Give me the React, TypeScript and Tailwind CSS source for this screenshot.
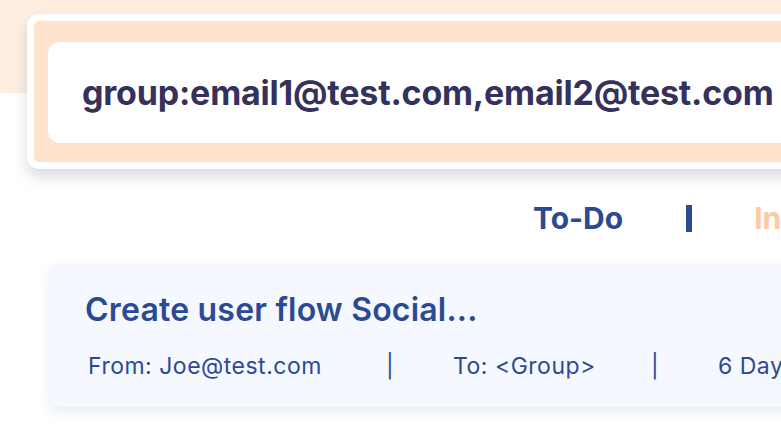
import React from "react";

export default function App() {
  const font = { fontFamily: "Inter, 'Noto Sans', sans-serif" };
  return (
    <div
      className="w-[781px] h-[428px] overflow-hidden bg-[linear-gradient(#fdeee0_0,#fdeee0_93px,#ffffff_93px)]"
      style={font}
    >
      <div className="pl-[27px] pt-[14px]">
        <div className="w-[900px] rounded-[12px] border-[7px] border-white bg-[#fde3cb] pl-[14px] pt-[21px] pb-[19px] shadow-[0_8px_14px_rgba(120,130,150,0.28)]">
          <div className="h-[101px] rounded-[12px] bg-white pl-[34px] flex items-center">
            <span className="text-[34px] font-bold tracking-[-0.2px] text-[#34315b] whitespace-nowrap">
              group:email1@test.com,email2@test.com
            </span>
          </div>
        </div>
      </div>
      <div className="flex items-center h-[50px] mt-[24px] pl-[533px] whitespace-nowrap">
        <span className="text-[30px] font-bold text-[#2c4a94] leading-[36px]">To-Do</span>
        <div className="ml-[63px] w-[6px] h-[27px] shrink-0 bg-[#2c4a94]"></div>
        <span className="ml-[62px] text-[30px] font-bold text-[#fdc9a5] leading-[36px]">In Progress</span>
      </div>
      <div className="pl-[48px] mt-[20px]">
        <div className="w-[900px] h-[144px] rounded-[12px] bg-[#f5f8fe] shadow-[0_6px_12px_rgba(150,160,190,0.18)] pl-[37px] pt-[27px]">
          <div className="text-[32px] font-semibold tracking-[0.2px] text-[#2c4a94] leading-[40px] whitespace-nowrap">
            Create user flow Social...
          </div>
          <div className="flex items-center mt-[23px] text-[23px] tracking-[0.5px] text-[#2c4a94] whitespace-nowrap leading-[26px] pl-[3px]">
            <span className="w-[298px] shrink-0">From: Joe@test.com</span>
            <span className="w-[67px] shrink-0">|</span>
            <span className="w-[198px] shrink-0">To: &lt;Group&gt;</span>
            <span className="w-[67px] shrink-0">|</span>
            <span className="shrink-0">6 Days ago</span>
          </div>
        </div>
      </div>
    </div>
  );
}
